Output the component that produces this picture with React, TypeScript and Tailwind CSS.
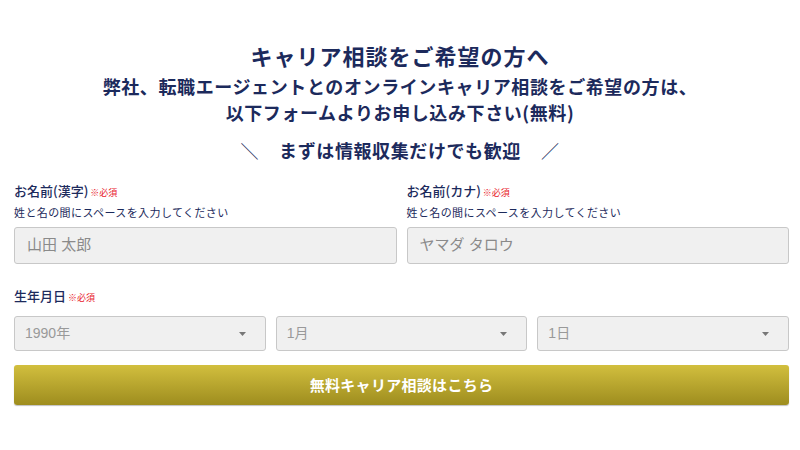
import React from 'react';

const font = "font-['Noto_Sans_CJK_JP','Noto_Sans',sans-serif]";
const fieldFont = "font-['Liberation_Sans','Noto_Sans_CJK_JP',sans-serif]";

const Req = () => <span className="ml-[2px] text-[9px] font-normal text-[#e8202a]">※必須</span>;

const Arrow = () => (
  <svg width="7" height="4" viewBox="0 0 7 4" className="absolute right-[19px] top-1/2 -translate-y-1/2">
    <path d="M0 0h7L3.5 4z" fill="#777" />
  </svg>
);

const NameField = ({ label, placeholder }: { label: string; placeholder: string }) => (
  <div className="flex-1">
    <div className="text-[13px] font-medium leading-[18px] text-[#1c2a5c]">
      {label}
      <Req />
    </div>
    <div className="mt-[2px] text-[11px] leading-[16px] tracking-[0.4px] text-[#1c2a5c]">
      姓と名の間にスペースを入力してください
    </div>
    <div className={`${fieldFont} mt-[7px] flex h-[37px] items-center rounded-[3px] border border-[#c8c8c8] bg-[#f0f0f0] px-[12px] text-[15px] text-[#8a8a8a]`}>
      {placeholder}
    </div>
  </div>
);

const SelectBox = ({ value }: { value: string }) => (
  <div className={`${fieldFont} relative flex h-[35px] flex-1 items-center rounded-[3px] border border-[#c8c8c8] bg-[#f0f0f0] px-[10px] text-[14px] text-[#999]`}>
    {value}
    <Arrow />
  </div>
);

const App = () => {
  return (
    <div className={`${font} h-[450px] w-[800px] bg-white`}>
      {/* Heading */}
      <div className="pt-[40px] text-center font-bold text-[#1c2a5c]">
        <h1 className="text-[22px] leading-[30px] tracking-[1px]">キャリア相談をご希望の方へ</h1>
        <p className="mt-[3px] text-[18px] leading-[26px] tracking-[0.6px]">
          弊社、転職エージェントとのオンラインキャリア相談をご希望の方は、
          <br />
          以下フォームよりお申し込み下さい(無料)
        </p>
        <p className="mt-[12px] flex items-center justify-center text-[18px] leading-[26px] tracking-[0.6px]">
          <span className="font-normal">＼</span>
          <span className="mx-[20px]">まずは情報収集だけでも歓迎</span>
          <span className="font-normal">／</span>
        </p>
      </div>

      {/* Form */}
      <div className="ml-[14px] mt-[19px] w-[775px]">
        <div className="flex gap-[10px]">
          <NameField label="お名前(漢字)" placeholder="山田 太郎" />
          <NameField label="お名前(カナ)" placeholder="ヤマダ タロウ" />
        </div>

        <div className="mt-[23px] text-[13px] font-medium leading-[18px] text-[#1c2a5c]">
          生年月日
          <Req />
        </div>
        <div className="mt-[9px] flex gap-[10px]">
          <SelectBox value="1990年" />
          <SelectBox value="1月" />
          <SelectBox value="1日" />
        </div>

        <button className="mt-[14px] flex h-[40px] w-full items-center justify-center rounded-[3px] bg-gradient-to-b from-[#d2bf3e] to-[#9e8d1e] text-[15px] font-bold tracking-[0.3px] text-white shadow-[0_1px_1px_rgba(0,0,0,0.25)]">
          無料キャリア相談はこちら
        </button>
      </div>
    </div>
  );
};

export default App;
